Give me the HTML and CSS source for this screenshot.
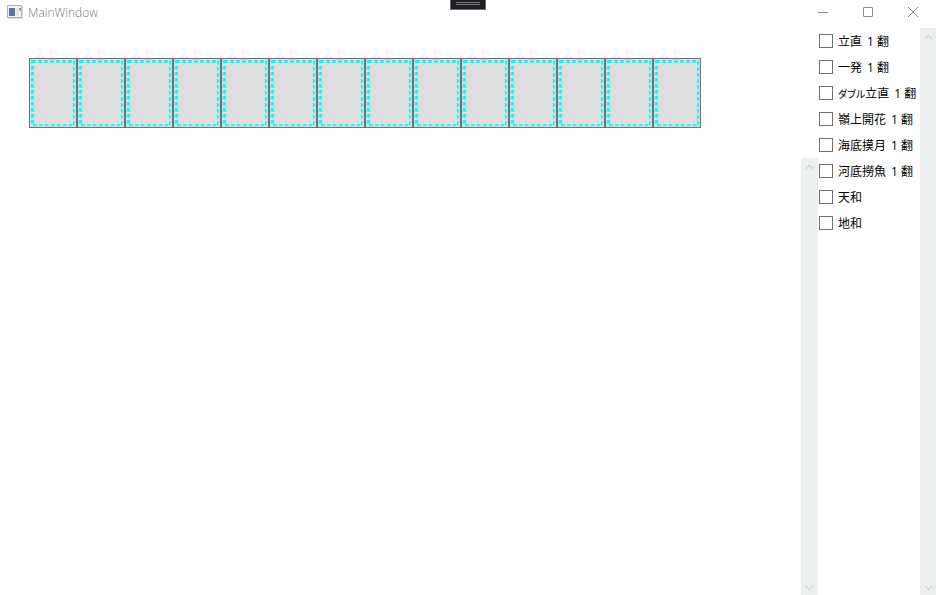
FILE: index.html
```
<!DOCTYPE html>
<html lang="ja">
<head>
<meta charset="utf-8">
<title>MainWindow</title>
<link rel="stylesheet" href="styles.css">
</head>
<body>
<header class="titlebar">
  <svg class="app-icon" width="16" height="14" viewBox="0 0 16 14" aria-hidden="true">
    <rect x="0.5" y="0.5" width="14" height="12" fill="#f6f5f4" stroke="#b5afae"/>
    <path d="M1 13.5H15.5V1" fill="none" stroke="#ddd8d4"/>
    <rect x="2" y="3" width="6" height="8" fill="#5377ad"/>
    <rect x="9" y="3" width="3" height="8" fill="#e2e5ec"/>
    <path d="M12 3h2v3h-1V5h-1z" fill="#8b98b5"/>
  </svg>
  <h1 class="title">MainWindow</h1>
  <div class="window-buttons">
    <button class="window-button" type="button" aria-label="Minimize"><svg width="12" height="12" viewBox="0 0 12 12"><path d="M1 6.5H11"/></svg></button>
    <button class="window-button" type="button" aria-label="Maximize"><svg width="12" height="12" viewBox="0 0 12 12"><rect x="1.5" y="1.5" width="9" height="9" rx="0.5"/></svg></button>
    <button class="window-button" type="button" aria-label="Close"><svg width="12" height="12" viewBox="0 0 12 12"><path d="M1 1L11 11M11 1L1 11"/></svg></button>
  </div>
  <button class="debug-handle" type="button" aria-label="Toolbar"></button>
</header>
<main class="content">
  <section class="board">
    <div class="hand" id="hand"></div>
    <div class="scrollbar results-scroll">
      <svg width="9" height="6" viewBox="0 0 9 6"><path d="M1 5L4.500 1.500L8 5"/></svg>
      <svg width="9" height="6" viewBox="0 0 9 6"><path d="M1 1L4.500 4.500L8 1"/></svg>
    </div>
  </section>
  <aside class="options">
    <label class="option"><input type="checkbox"><span>立直</span><span><b>1</b>翻</span></label>
    <label class="option"><input type="checkbox"><span>一発</span><span><b>1</b>翻</span></label>
    <label class="option"><input type="checkbox"><span><i>ダブル</i>立直</span><span><b>1</b>翻</span></label>
    <label class="option"><input type="checkbox"><span>嶺上開花</span><span><b>1</b>翻</span></label>
    <label class="option"><input type="checkbox"><span>海底摸月</span><span><b>1</b>翻</span></label>
    <label class="option"><input type="checkbox"><span>河底撈魚</span><span><b>1</b>翻</span></label>
    <label class="option"><input type="checkbox"><span>天和</span></label>
    <label class="option"><input type="checkbox"><span>地和</span></label>
  </aside>
  <div class="scrollbar">
    <svg width="9" height="6" viewBox="0 0 9 6"><path d="M1 5L4.500 1.500L8 5"/></svg>
    <svg width="9" height="6" viewBox="0 0 9 6"><path d="M1 1L4.500 4.500L8 1"/></svg>
  </div>
</main>
<script src="script.js"></script>
</body>
</html>
```
FILE: styles.css
```
* { box-sizing: border-box; }
body {
  margin: 0;
  min-height: 100vh;
  display: flex;
  flex-direction: column;
  background: #fff;
  color: #000;
  font: 12px/16px "Noto Sans CJK JP", sans-serif;
}
button { padding: 0; border: 0; background: none; }
.titlebar {
  position: relative;
  display: flex;
  align-items: center;
  height: 28px;
  padding: 0 1px 4px 7px;
}
.title {
  margin: 2px 0 0 5px;
  color: #777;
  font: 300 12px/16px "Open Sans", sans-serif;
}
.window-buttons { display: flex; margin-left: auto; }
.window-button {
  display: grid;
  place-items: center;
  width: 45px;
  height: 24px;
}
.window-button svg { fill: none; stroke: #8d8098; }
.debug-handle {
  position: absolute;
  top: 0;
  left: 50%;
  width: 36px;
  height: 10px;
  margin-left: -18px;
  border: 1px solid #68686c;
  border-top: 0;
  background: linear-gradient(#77777b 0 1px, transparent 1px 2px, #77777b 2px 3px) center 2px / 24px 3px no-repeat #1f1f23;
}
.content { flex: 1; display: flex; }
.board {
  flex: 1;
  display: flex;
  flex-direction: column;
  padding-top: 30px;
}
.hand { display: flex; padding-left: 29px; }
.tile {
  width: 48px;
  height: 70px;
  border: 1px solid #707070;
  background: #ddd;
}
.tile svg { display: block; }
.tile path { fill: none; stroke: #00ffff; }
.tile .wide { stroke-width: 3; }
.tile .narrow { stroke-width: 2; }
.scrollbar {
  display: flex;
  flex-direction: column;
  justify-content: space-between;
  align-items: center;
  width: 16px;
  padding: 6px 0 4px;
  background: #eef0f0;
}
.scrollbar path { fill: none; stroke: #d2d5d5; stroke-width: 1.3; }
.results-scroll {
  flex: 1;
  align-self: flex-end;
  width: 17px;
  margin-top: 30px;
}
.options { width: 102px; padding: 0 0 0 1px; }
.option {
  display: flex;
  align-items: center;
  height: 26px;
  white-space: nowrap;
  font-feature-settings: "palt";
}
.option input {
  appearance: none;
  flex: none;
  width: 14px;
  height: 14px;
  margin: 0 5px 0 0;
  border: 1px solid #707070;
  background: #fff;
}
.option span + span { margin-left: 5px; }
.option b { margin-right: 3px; font: 12px/16px "Open Sans", sans-serif; }
.option i { font-size: 10px; font-style: normal; }
```
FILE: script.js
```
const TILE_COUNT = 14;
const hand = document.getElementById("hand");

for (let i = 1; i <= TILE_COUNT; i++) {
  const tile = document.createElement("button");
  tile.type = "button";
  tile.className = "tile";
  tile.setAttribute("aria-label", "Tile " + i);
  tile.innerHTML = `<svg width="46" height="68" viewBox="0 0 46 68">
    <path class="wide" stroke-dasharray="3.4 2.6" d="M2.3 2.5H45"/>
    <path class="wide" stroke-dasharray="3.4 2.6" d="M2.5 1V66"/>
    <path class="narrow" stroke-dasharray="3.4 2.6" d="M44 2.3V67"/>
    <path class="narrow" stroke-dasharray="3.4 2.6" d="M3 66H44"/>
  </svg>`;
  hand.append(tile);
}
```
